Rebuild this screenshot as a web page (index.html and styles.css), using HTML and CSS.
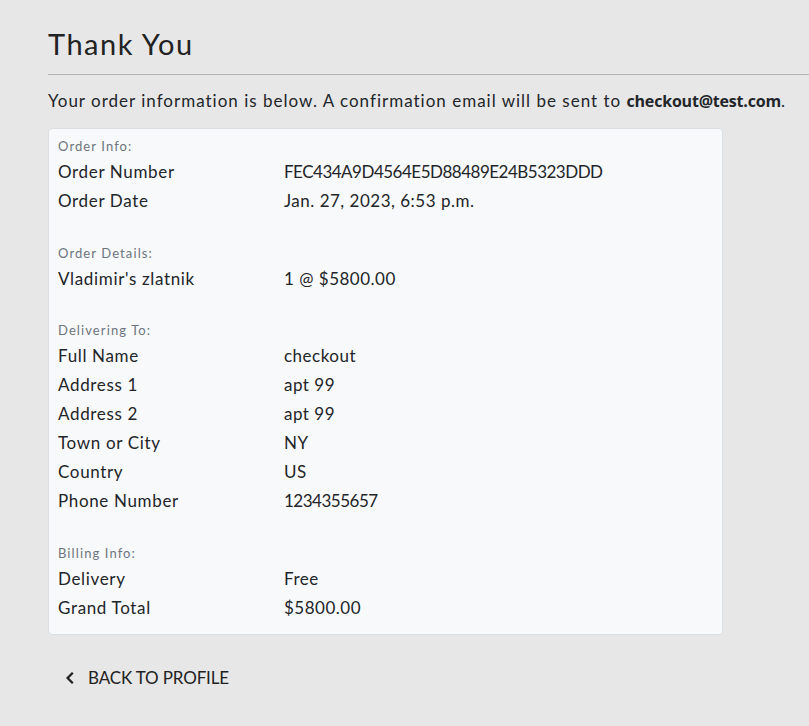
FILE: index.html
```html
<!DOCTYPE html>
<html lang="en">
<head>
<meta charset="utf-8">
<title>Thank You</title>
<link rel="stylesheet" href="styles.css">
</head>
<body>
<main class="page">
  <h1 class="title">Thank You</h1>
  <hr class="rule">
  <p class="intro">Your order information is below. A confirmation email will be sent to <strong class="email">checkout@test.com</strong>.</p>

  <section class="card">
    <div class="group">
      <div class="label">Order Info:</div>
      <div class="row"><span class="key">Order Number</span><span class="val code">FEC434A9D4564E5D88489E24B5323DDD</span></div>
      <div class="row"><span class="key">Order Date</span><span class="val">Jan. 27, 2023, 6:53 p.m.</span></div>
    </div>
    <div class="group">
      <div class="label">Order Details:</div>
      <div class="row"><span class="key">Vladimir's zlatnik</span><span class="val">1 @ $5800.00</span></div>
    </div>
    <div class="group">
      <div class="label">Delivering To:</div>
      <div class="row"><span class="key">Full Name</span><span class="val">checkout</span></div>
      <div class="row"><span class="key">Address 1</span><span class="val">apt 99</span></div>
      <div class="row"><span class="key">Address 2</span><span class="val">apt 99</span></div>
      <div class="row"><span class="key">Town or City</span><span class="val">NY</span></div>
      <div class="row"><span class="key">Country</span><span class="val">US</span></div>
      <div class="row"><span class="key">Phone Number</span><span class="val code">1234355657</span></div>
    </div>
    <div class="group">
      <div class="label">Billing Info:</div>
      <div class="row"><span class="key">Delivery</span><span class="val">Free</span></div>
      <div class="row"><span class="key">Grand Total</span><span class="val">$5800.00</span></div>
    </div>
  </section>

  <a class="back" href="#">
    <svg class="chev" width="10" height="14" viewBox="0 0 10 14" aria-hidden="true"><path d="M7.8 1.8 L2.6 7 L7.8 12.2" fill="none" stroke="#222" stroke-width="2.3"/></svg>
    <span>BACK TO PROFILE</span>
  </a>
</main>
</body>
</html>
```

FILE: styles.css
```css
* { box-sizing: border-box; }
html, body { margin: 0; padding: 0; }
body {
  background: #e7e7e7;
  color: #222529;
  font-family: "Lato", "Noto Sans", sans-serif;
  overflow: hidden;
}
.page {
  padding: 26px 0 0 48px;
  width: 809px;
}
.title {
  margin: 0;
  font-weight: 400;
  font-size: 29px;
  line-height: 36px;
  letter-spacing: 1.5px;
  color: #222;
}
.rule {
  margin: 12px 0 0 0;
  border: 0;
  border-top: 1px solid #b3b3b3;
  height: 0;
  width: 761px;
}
.intro {
  margin: 13px 0 0 0;
  font-size: 17px;
  line-height: 26px;
  letter-spacing: 1px;
  white-space: nowrap;
}
.email {
  font-family: "Open Sans", "Liberation Sans", sans-serif;
  font-weight: 700;
  font-size: 16px;
  letter-spacing: -0.2px;
}
.card {
  margin-top: 14px;
  width: 675px;
  background: #f8f9fa;
  border: 1px solid #dcdfe2;
  border-radius: 4px;
  padding: 6px 9px 12px 9px;
}
.group + .group { margin-top: 26.5px; }
.label {
  font-size: 13px;
  line-height: 22px;
  color: #6c757d;
  letter-spacing: 1.1px;
}
.row {
  display: grid;
  grid-template-columns: 226px 1fr;
  font-size: 17px;
  line-height: 29px;
  letter-spacing: 0.65px;
}
.val { letter-spacing: 0.5px; }
.val.code { letter-spacing: -0.5px; }
.back {
  display: inline-flex;
  align-items: center;
  gap: 13px;
  margin: 30px 0 0 17px;
  color: #222;
  text-decoration: none;
  font-size: 17px;
  line-height: 26px;
  letter-spacing: -0.15px;
}
.chev { display: block; }
```
